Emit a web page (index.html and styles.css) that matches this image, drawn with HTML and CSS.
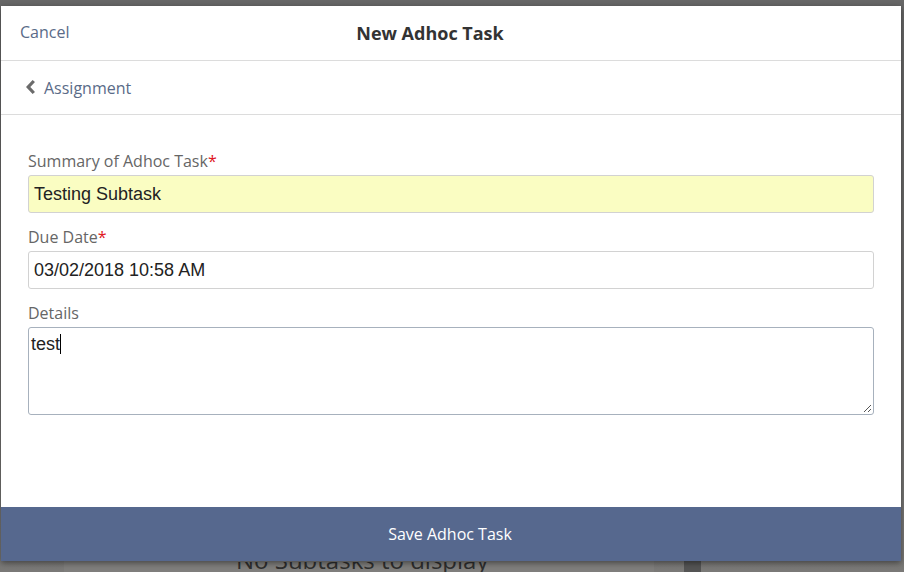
FILE: index.html
```html
<!DOCTYPE html>
<html>
<head>
<meta charset="utf-8">
<link rel="stylesheet" href="styles.css">
</head>
<body>
<div class="backdrop">
  <div class="bg-panel"></div>
  <div class="bg-clip"><div class="bg-empty">No Subtasks to display</div></div>
  <div class="bg-scroll"></div>
</div>
<div class="modal">
  <header class="modal-header">
    <a class="cancel">Cancel</a>
    <h1 class="title">New Adhoc Task</h1>
    <span class="spacer"></span>
  </header>
  <nav class="crumb">
    <svg class="chev" width="11" height="16" viewBox="0 0 11 16"><path d="M8.8 2 L3.2 8 L8.8 14" fill="none" stroke="#6b6b6b" stroke-width="3.2" stroke-linejoin="miter"/></svg>
    <span>Assignment</span>
  </nav>
  <main class="form">
    <label class="label">Summary of Adhoc Task<span class="req">*</span></label>
    <div class="input filled">Testing Subtask</div>
    <label class="label">Due Date<span class="req">*</span></label>
    <div class="input">03/02/2018 10:58 AM</div>
    <label class="label">Details</label>
    <div class="textarea"><span class="ta-text">test</span><span class="caret"></span>
      <svg class="grip" width="10" height="10" viewBox="0 0 10 10"><path d="M9 2 L2 9 M9 6 L6 9" stroke="#555" stroke-width="1"/></svg>
    </div>
  </main>
  <footer class="save">Save Adhoc Task</footer>
</div>
</body>
</html>
```
FILE: styles.css
```css
* { box-sizing: border-box; }
html, body { margin: 0; padding: 0; }
body {
  width: 904px;
  height: 572px;
  overflow: hidden;
  background: #6c6b6a;
  font-family: "Open Sans", "Liberation Sans", sans-serif;
  position: relative;
}
.backdrop {
  position: absolute;
  left: 0; top: 0; width: 904px; height: 572px;
  background: linear-gradient(#676767 0, #6c6b6a 300px, #7a7977 572px);
}
.bg-panel {
  position: absolute;
  left: 64px; top: 480px; width: 590px; height: 92px;
  background: #7f7e7c;
}
.bg-clip {
  position: absolute;
  left: 230px; top: 562px; width: 270px; height: 10px;
  overflow: hidden;
}
.bg-empty {
  margin: -18px 0 0 6px;
  font-size: 24px;
  line-height: 32px;
  color: #2e2e2e;
  white-space: nowrap;
}
.bg-scroll {
  position: absolute;
  left: 684px; top: 540px; width: 17px; height: 32px;
  background: #545454;
}
.modal {
  position: relative;
  margin: 6px 0 0 1px;
  width: 900px;
  height: 555px;
  background: #fff;
  display: flex;
  flex-direction: column;
  box-shadow: 0 2px 6px rgba(0,0,0,0.45);
}
.modal-header {
  height: 55px;
  display: flex;
  align-items: center;
  padding: 0 19px;
  border-bottom: 1px solid #dcdcdc;
}
.cancel {
  font-size: 16px;
  color: #5a6b88;
  width: 120px;
  margin-top: -2px;
}
.title {
  flex: 1;
  text-align: center;
  margin: 0;
  font-size: 18px;
  font-weight: 700;
  color: #333;
  padding-right: 42px;
}
.spacer { width: 120px; }
.crumb {
  height: 54px;
  display: flex;
  align-items: center;
  gap: 8px;
  padding: 0 0 0 24px;
  border-bottom: 1px solid #dcdcdc;
  font-size: 16px;
  color: #5a6b88;
}
.chev { margin-top: -2px; }
.form {
  flex: 1;
  padding: 35px 27px 0 27px;
  display: flex;
  flex-direction: column;
}
.label {
  font-size: 16px;
  color: #666;
  line-height: 22px;
  height: 22px;
  margin-bottom: 3px;
}
.req { color: #e0141c; }
.input {
  height: 38px;
  border: 1px solid #d2d2d2;
  border-radius: 3px;
  padding: 0 5px;
  font-family: "Liberation Sans", Arial, sans-serif;
  font-size: 18px;
  color: #222;
  line-height: 36px;
  margin-bottom: 13px;
}
.input.filled { background: #fafdc2; }
.textarea {
  position: relative;
  height: 88px;
  border: 1px solid #a7b1bd;
  border-radius: 3px;
  padding: 4px 2px;
  font-family: "Liberation Sans", Arial, sans-serif;
  font-size: 18px;
  color: #222;
  line-height: 24px;
}
.caret {
  display: inline-block;
  width: 1px;
  height: 20px;
  background: #000;
  vertical-align: -4px;
}
.grip {
  position: absolute;
  right: 1px;
  bottom: 1px;
}
.save {
  height: 54px;
  background: #56688e;
  color: #fff;
  font-size: 16px;
  display: flex;
  align-items: center;
  justify-content: center;
  padding-right: 2px;
}
```
